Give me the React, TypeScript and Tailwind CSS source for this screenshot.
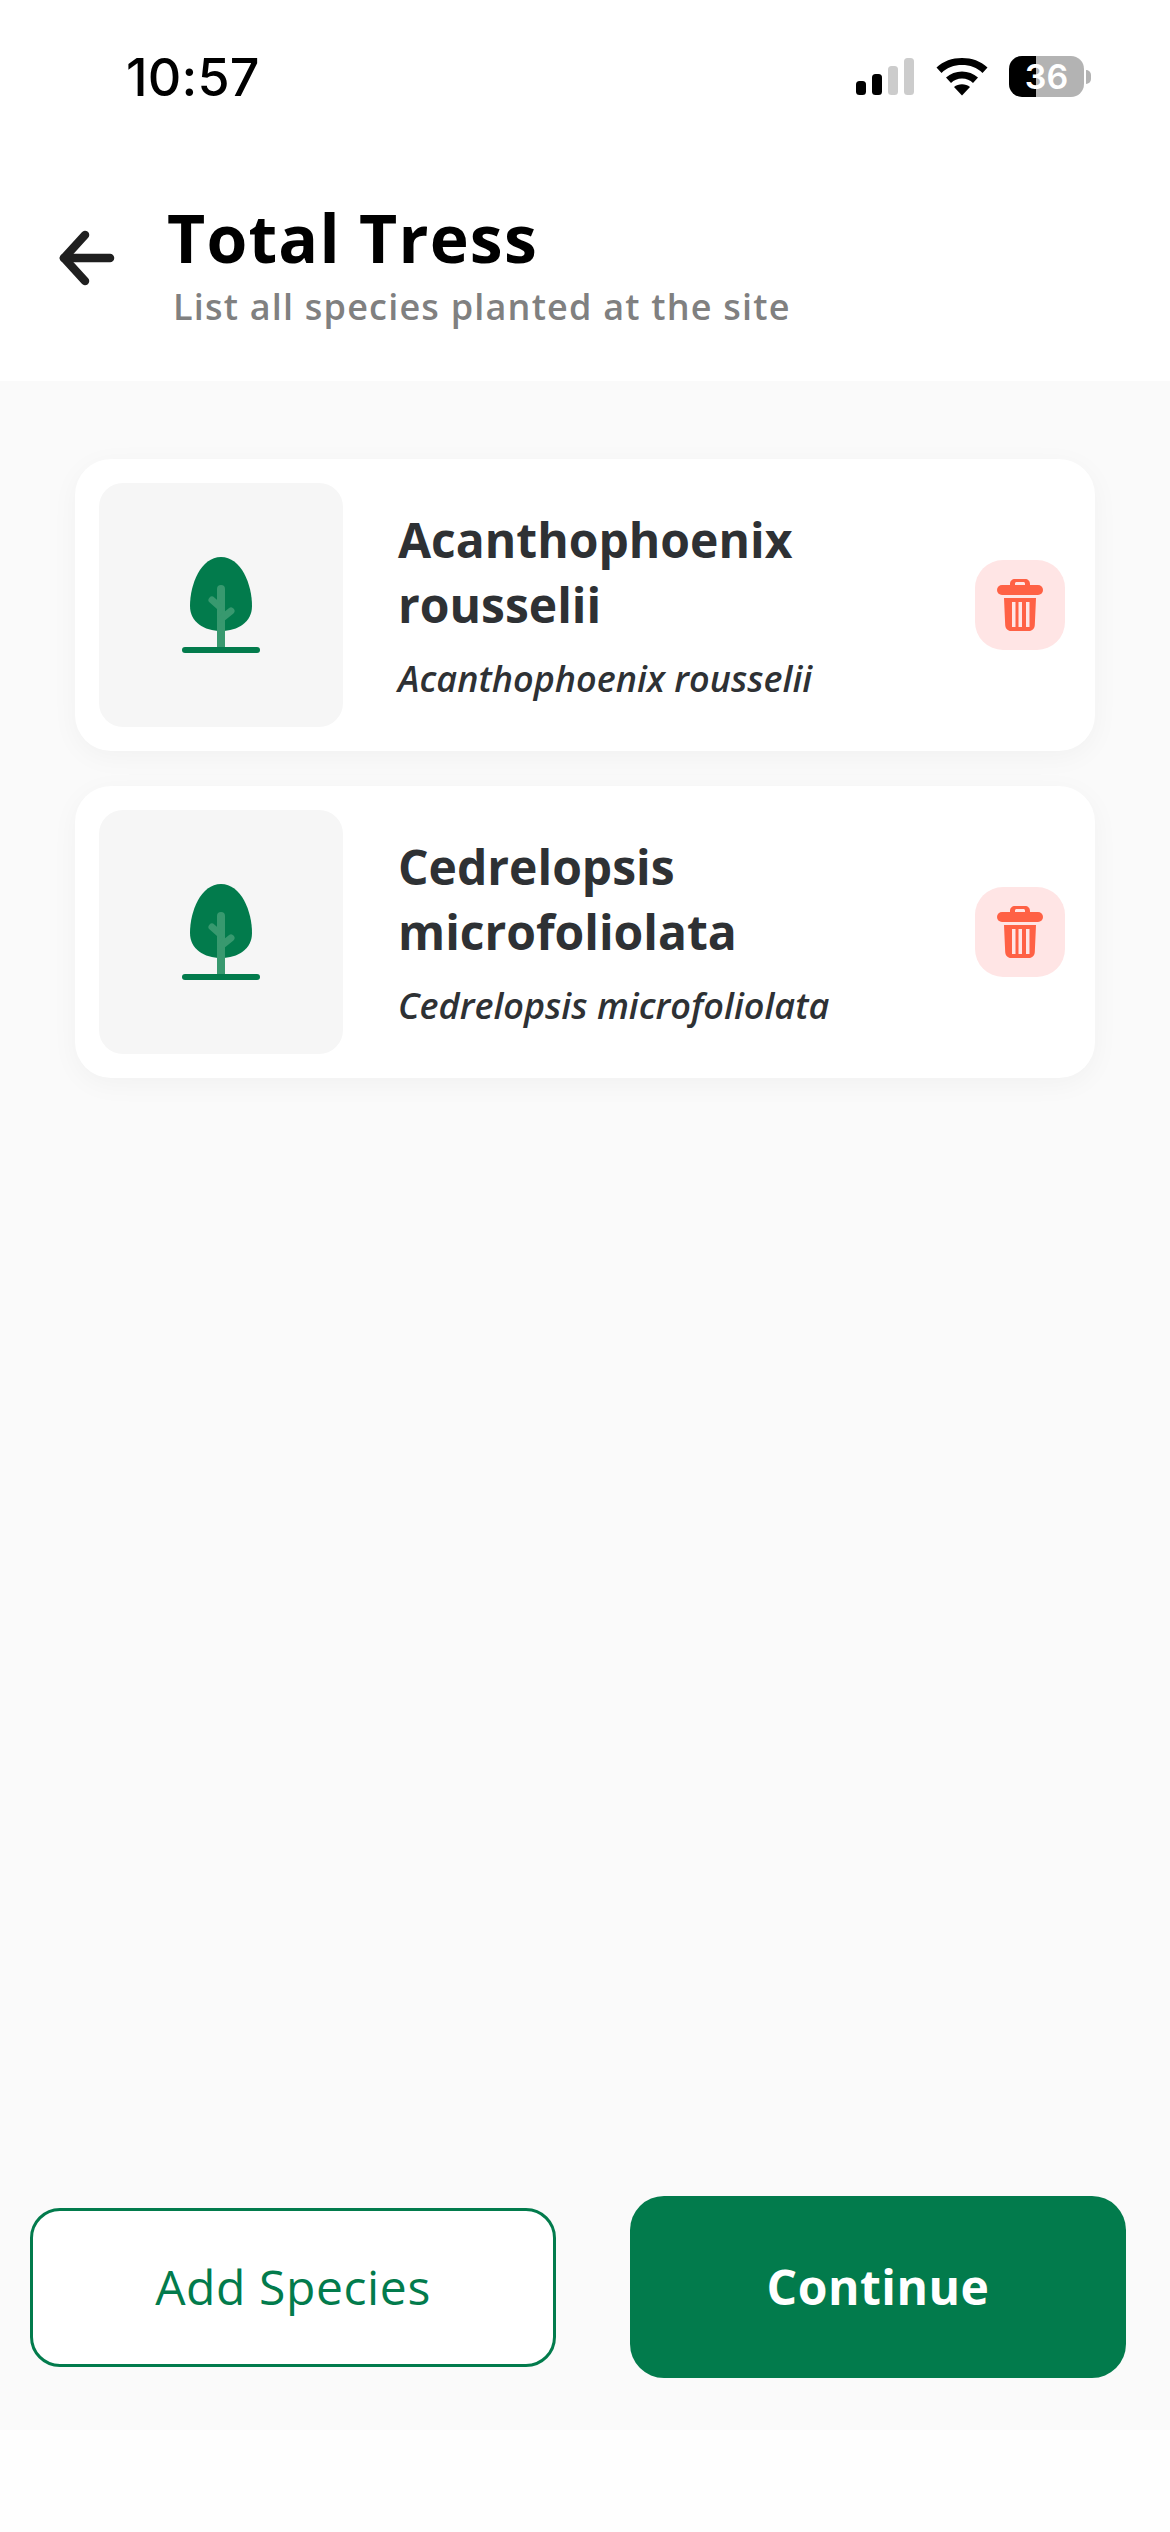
const species = [
  { name: ['Acanthophoenix', 'rousselii'], latin: 'Acanthophoenix rousselii' },
  { name: ['Cedrelopsis', 'microfoliolata'], latin: 'Cedrelopsis microfoliolata' },
]

function SignalIcon() {
  return (
    <svg width="60" height="40" viewBox="0 0 60 40">
      <rect x="0" y="24" width="10" height="14" rx="3.5" fill="#000" />
      <rect x="16" y="17" width="10" height="21" rx="3.5" fill="#000" />
      <rect x="32" y="9" width="10" height="29" rx="3.5" fill="#ccc" />
      <rect x="48" y="1" width="10" height="37" rx="3.5" fill="#ccc" />
    </svg>
  )
}

function WifiIcon() {
  return (
    <svg width="52" height="40" viewBox="0 0 52 40">
      <path d="M0.5 10.5C7.5 4 16 1 26 1s18.500 3 25.500 9.500l-5 5.500C41 10.500 34 8 26 8S11 10.500 5.500 16z" fill="#000" />
      <path d="M10 20.500C14.500 16.500 20 14.500 26 14.500s11.500 2 16 6l-5 5.500C34 23 30.500 21.500 26 21.500S18 23 15 26z" fill="#000" />
      <path d="M18 30c2.200-1.800 5-2.800 8-2.800s5.800 1 8 2.800l-8 8.500z" fill="#000" />
    </svg>
  )
}

function BackArrow() {
  return (
    <svg width="64" height="60" viewBox="0 0 64 60" fill="none" stroke="#1f1f1f" strokeWidth="8.500" strokeLinecap="round" strokeLinejoin="round">
      <path d="M55 30H9" />
      <path d="M30 7 9 30l21 23" />
    </svg>
  )
}

function TreeIcon() {
  return (
    <svg width="78" height="96" viewBox="0 0 78 96">
      <path d="M39 0C19 0 8 27 8 49c0 16 14 25 31 25s31-9 31-25C70 27 59 0 39 0z" fill="#027b4c" />
      <path d="M39 32v58" stroke="#38996f" strokeWidth="8" strokeLinecap="round" />
      <path d="M39 51 30 43M39 62l10-8" stroke="#38996f" strokeWidth="7" strokeLinecap="round" />
      <path d="M3 93h72" stroke="#027b4c" strokeWidth="6" strokeLinecap="round" />
    </svg>
  )
}

function TrashIcon() {
  return (
    <svg width="46" height="52" viewBox="0 0 46 52" fill="#ff6145">
      <path d="M13 7V5c0-3 2-5 5-5h10c3 0 5 2 5 5v2h-5V4.500c0-.8-.7-1.500-1.500-1.500h-7c-.8 0-1.500.7-1.500 1.500V7z" />
      <rect x="0" y="6" width="46" height="10" rx="5" />
      <path fillRule="evenodd" d="M7 19h32l-1.200 27c-.2 3.500-2.500 6-6 6H14.200c-3.500 0-5.800-2.500-6-6zM15 23v25h3.500V23zm6.500 0v25H25V23zm7.500 0v25h3.500V23z" />
    </svg>
  )
}

function SpeciesCard({ name, latin }: { name: string[]; latin: string }) {
  return (
    <div className="flex h-[292px] items-center rounded-[36px] bg-white p-6 shadow-[0_6px_28px_rgba(0,0,0,0.04)]">
      <div className="flex h-[244px] w-[244px] shrink-0 items-center justify-center rounded-[24px] bg-[#f6f6f6]">
        <TreeIcon />
      </div>
      <div className="ml-[55px] flex-1">
        <div className="text-[48px] leading-[65px] font-bold text-[#2e3134]">
          {name[0]}
          <br />
          {name[1]}
        </div>
        <div className="mt-[18px] text-[36px] leading-[48px] font-semibold text-[#2e3134] italic">{latin}</div>
      </div>
      <div className="mr-[6px] flex h-[90px] w-[90px] shrink-0 items-center justify-center rounded-[28px] bg-[#ffe5e5]">
        <TrashIcon />
      </div>
    </div>
  )
}

export default function App() {
  return (
    <div className="flex h-[2532px] w-[1170px] flex-col bg-white font-['Open_Sans',sans-serif]">
      <div className="flex h-[156px] shrink-0 items-start justify-between pt-[50px] pr-[79px] pl-[126px]">
        <span className="font-['Inter',sans-serif] text-[52px] leading-[56px] font-medium tracking-[0.2px] text-black">10:57</span>
        <div className="flex items-center pt-[6px]">
          <SignalIcon />
          <div className="mr-[21px] ml-[20px]">
            <WifiIcon />
          </div>
          <div className="flex h-[41px] w-[75px] items-center justify-center rounded-[13px] bg-[linear-gradient(90deg,#000_36%,#b3b3b3_36%)] font-['Inter',sans-serif] text-[34px] leading-none font-semibold text-white">
            36
          </div>
          <div className="ml-[2px] h-[14px] w-[5px] rounded-r-full bg-[#b3b3b3]" />
        </div>
      </div>

      <div className="flex h-[225px] shrink-0 items-start pl-[55px]">
        <div className="mt-[72px]">
          <BackArrow />
        </div>
        <div className="ml-[48px] pt-[36px]">
          <div className="text-[66px] leading-[90px] font-bold tracking-[1.200px] text-black">Total Tress</div>
          <div className="mt-[1px] ml-[6px] text-[36px] leading-[48px] font-semibold tracking-[1.200px] text-[#808080]">
            List all species planted at the site
          </div>
        </div>
      </div>

      <div className="flex flex-1 flex-col justify-between bg-[#fafafa]">
        <div className="flex flex-col gap-[35px] pt-[78px] pr-[75px] pl-[75px]">
          {species.map(s => (
            <SpeciesCard key={s.latin} name={s.name} latin={s.latin} />
          ))}
        </div>
        <div className="flex items-center justify-between pr-[44px] pb-[52px] pl-[30px]">
          <button className="h-[159px] w-[526px] rounded-[30px] border-[3px] border-[#027b4c] bg-white text-[48px] font-normal tracking-[0.6px] text-[#027b4c]">
            Add Species
          </button>
          <button className="h-[182px] w-[496px] rounded-[34px] bg-[#027b4c] text-[48px] font-bold tracking-[0.5px] text-white">Continue</button>
        </div>
      </div>

      <div className="h-[102px] shrink-0 bg-[#fefefe]" />
    </div>
  )
}
